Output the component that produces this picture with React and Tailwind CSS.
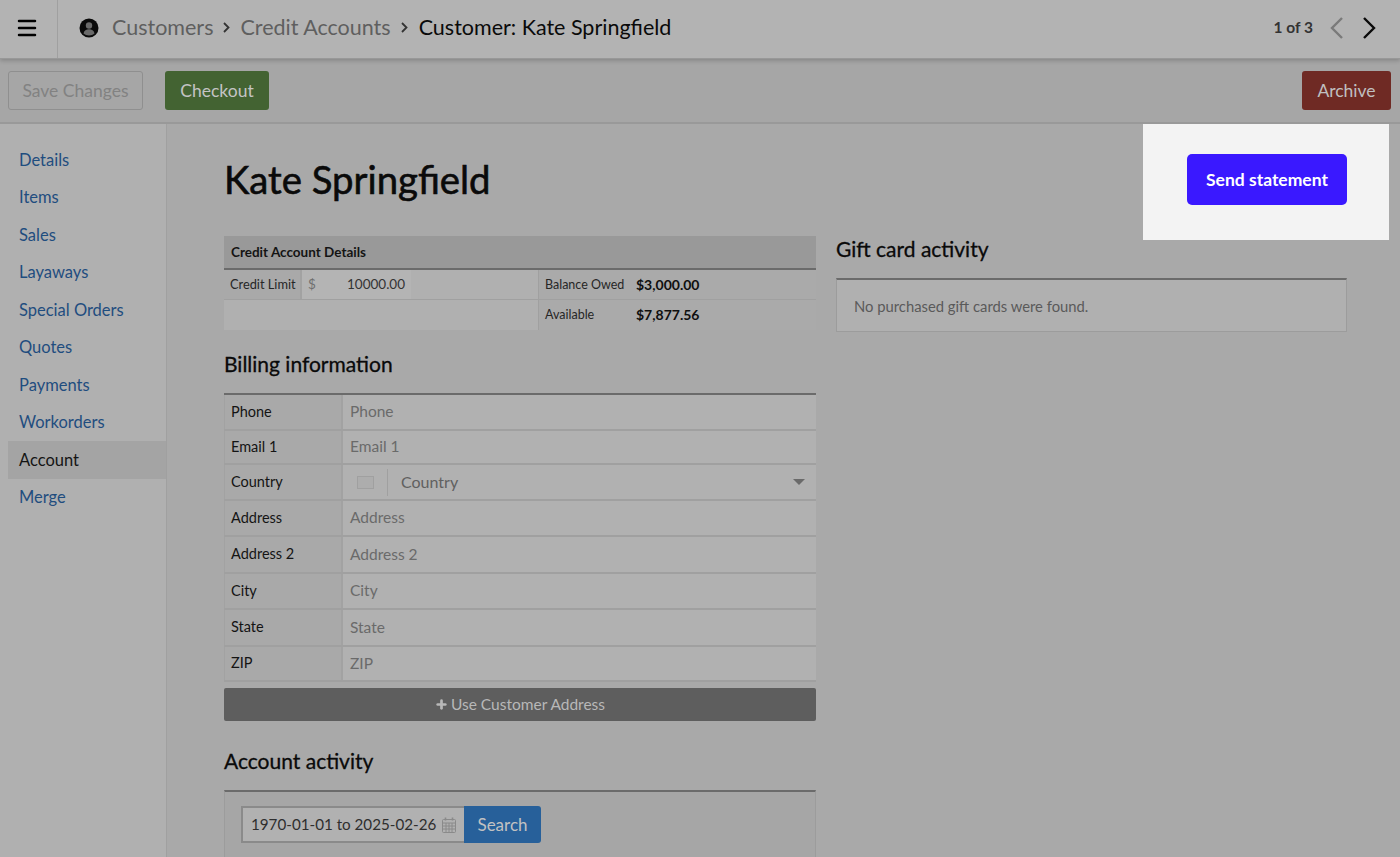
import React from "react";
import { Menu, Plus } from "lucide-react";

const navItems = ["Details", "Items", "Sales", "Layaways", "Special Orders", "Quotes", "Payments", "Workorders", "Account", "Merge"];

const billingRows = [
    { label: "Phone", height: "h-[36px]" },
    { label: "Email 1", height: "h-[34px]" },
    { label: "Country", height: "h-[36px]", select: true },
    { label: "Address", height: "h-[36px]" },
    { label: "Address 2", height: "h-[37px]" },
    { label: "City", height: "h-[36px]" },
    { label: "State", height: "h-[37px]" },
    { label: "ZIP", height: "h-[35px]" },
];

function Crumb() {
    return (
        <svg viewBox="0 0 7 11" className="w-[7px] h-[11px] mx-[10px]" fill="none" stroke="#333333" strokeWidth="1.8">
            <path d="M1 1l4.500 4.500L1 10" />
        </svg>
    );
}

function Header() {
    return (
        <header className="relative z-10 h-[59px] flex items-center pb-[3px] bg-[#b3b3b3] border-b border-[#989898] shadow-[0_2px_4px_rgba(0,0,0,0.18)]">
            <div className="w-[58px] -mb-[3px] h-[58px] pb-[3px] flex items-center justify-center border-r border-[#a0a0a0]">
                <Menu className="w-[24px] h-[24px] text-black -ml-[3px]" strokeWidth={2.5} />
            </div>
            <svg viewBox="0 0 20 20" className="w-5 h-5 ml-[21px]">
                <circle cx="10" cy="10" r="9.5" fill="#0a0a0a" />
                <circle cx="10" cy="7.500" r="3.200" fill="#6a6a6a" />
                <path d="M4.500 15.500c.5-3 2.800-4.300 5.500-4.300s5 1.300 5.500 4.300c-1.400 1.300-3.400 2-5.500 2s-4.100-.7-5.500-2z" fill="#6a6a6a" />
            </svg>
            <nav className="flex items-center ml-[13px] text-[21.5px] text-[#5f5f5f]">
                <span>Customers</span>
                <Crumb />
                <span>Credit Accounts</span>
                <Crumb />
                <span className="ml-[1px] text-[#0a0a0a]">Customer: Kate Springfield</span>
            </nav>
            <div className="ml-auto flex items-center pr-[24px]">
                <span className="text-[15.5px] font-bold text-[#333333] mr-[17px]">1 of 3</span>
                <svg viewBox="0 0 13 22" className="w-[13px] h-[22px] mr-[20px]" fill="none" stroke="#7a7a7a" strokeWidth="2.4">
                    <path d="M12 1L2 11l10 10" />
                </svg>
                <svg viewBox="0 0 13 22" className="w-[13px] h-[22px]" fill="none" stroke="#0a0a0a" strokeWidth="2.4">
                    <path d="M1 1l10 10L1 21" />
                </svg>
            </div>
        </header>
    );
}

function Toolbar() {
    return (
        <div className="h-[65px] flex items-center justify-between bg-[#a6a6a6] border-b-2 border-[#999999] pl-[8px] pr-[9px]">
            <div className="flex items-center gap-[22px]">
                <button className="w-[135px] h-[39px] pt-[1px] rounded-[3px] border border-[#8f8f8f] text-[17.5px] text-[#828282]">Save Changes</button>
                <button className="w-[104px] h-[39px] pt-[1px] rounded-[3px] bg-[#436332] text-[17.5px] text-[#c4c4c4]">Checkout</button>
            </div>
            <button className="w-[89px] h-[39px] pt-[1px] rounded-[3px] bg-[#6f2a24] text-[17.5px] text-[#c0c0c0]">Archive</button>
        </div>
    );
}

function Sidebar() {
    return (
        <aside className="w-[167px] shrink-0 bg-[#b0b0b0] border-r border-[#a0a0a0] pl-[8px] pt-[17.4px]">
            {navItems.map((item) => (
                <div
                    key={item}
                    className={`h-[37.5px] flex items-center pl-[11px] text-[16.5px] ${item === "Account" ? "bg-[#a4a4a4] text-[#141414]" : "text-[#1f4d7f]"}`}
                >
                    {item}
                </div>
            ))}
        </aside>
    );
}

function CreditDetails() {
    return (
        <div className="text-[#1a1a1a] bg-[#b0b0b0]">
            <div className="h-[34px] flex items-center pl-[7px] bg-[#999999] border-b-2 border-[#6b6b6b] text-[13.5px] font-bold text-[#141414]">
                Credit Account Details
            </div>
            <div className="flex h-[30px] border-b border-[#a0a0a0]">
                <div className="w-[314px] flex">
                    <div className="w-[78px] flex items-center pl-[6px] bg-[#a9a9a9] text-[12.8px] text-[#262626] border-r-2 border-[#a2a2a2]">Credit Limit</div>
                    <div className="w-[109px] flex items-center justify-between pl-[6px] pr-[6px] bg-[#b4b4b4] text-[13.5px] text-[#333333]">
                        <span className="text-[#6f6f6f]">$</span>
                        <span>10000.00</span>
                    </div>
                </div>
                <div className="flex-1 flex items-center pl-[6px] bg-[#aaaaaa] text-[12.5px] border-l border-[#a0a0a0]">
                    <span className="w-[91px] mt-[2px] text-[#262626]">Balance Owed</span>
                    <span className="text-[14px] font-bold text-[#0f0f0f]">$3,000.00</span>
                </div>
            </div>
            <div className="flex h-[30px]">
                <div className="w-[314px]" />
                <div className="flex-1 flex items-center pl-[6px] pb-[1px] bg-[#aaaaaa] text-[12.5px] border-l border-[#a0a0a0]">
                    <span className="w-[91px] mt-[2px] text-[#262626]">Available</span>
                    <span className="text-[14px] font-bold text-[#0f0f0f]">$7,877.56</span>
                </div>
            </div>
        </div>
    );
}

function BillingTable() {
    return (
        <div className="border-t-2 border-[#6b6b6b]">
            {billingRows.map((row) => (
                <div key={row.label} className={`${row.height} flex border-b-2 border-[#a0a0a0] bg-[#b1b1b1]`}>
                    <div className="w-[118px] shrink-0 flex items-center pl-[6px] pb-[1px] bg-[#a9a9a9] border-x border-[#a2a2a2] text-[14.5px] text-[#141414]">
                        {row.label}
                    </div>
                    {row.select ? (
                        <div className="flex-1 flex items-center pl-[14px] pr-[11px] border-l border-[#a2a2a2] text-[16px] text-[#606060]">
                            <div className="w-[17px] h-[13px] border border-[#a0a0a0] bg-[#adadad]" />
                            <div className="w-px h-[27px] bg-[#a0a0a0] mx-[13px]" />
                            <span>Country</span>
                            <div className="ml-auto w-0 h-0 border-x-[6px] border-x-transparent border-t-[6px] border-t-[#6a6a6a]" />
                        </div>
                    ) : (
                        <div className="flex-1 flex items-center pl-[7px] border-l border-[#a2a2a2] text-[15.5px] text-[#6a6a6a]">{row.label}</div>
                    )}
                </div>
            ))}
        </div>
    );
}

function CalendarIcon() {
    return (
        <svg viewBox="0 0 14 16" className="w-[14px] h-[16px]" fill="none" stroke="#8a8a8a" strokeWidth="1">
            <rect x="0.500" y="2.500" width="13" height="13" rx="1" />
            <path d="M0.500 6h13M0.500 9h13M0.500 12h13M4 6v9.500M7 6v9.500M10 6v9.500" />
            <path d="M3.500 0.500v3M10.500 0.500v3" strokeWidth="1.600" />
        </svg>
    );
}

function AccountActivity() {
    return (
        <div className="h-[80px] border-t-2 border-[#6b6b6b] border-x border-x-[#9c9c9c] bg-[#a6a6a6] px-[16px] pt-[14px]">
            <div className="flex h-[37px]">
                <div className="w-[223px] flex items-center pl-[8px] pr-[8px] justify-between border-2 border-r-0 border-[#8a8a8a] bg-[#b1b1b1] text-[15.2px] text-[#2e2e2e]">
                    <span className="whitespace-nowrap">1970-01-01 to 2025-02-26</span>
                    <CalendarIcon />
                </div>
                <button className="w-[77px] rounded-r-[3px] bg-[#27609a] text-[17px] text-[#c2c2c2]">Search</button>
            </div>
        </div>
    );
}

export default function App() {
    return (
        <div className="relative w-[1400px] h-[857px] overflow-hidden bg-[#a9a9a9] flex flex-col font-['Lato',sans-serif]">
            <Header />
            <Toolbar />
            <div className="flex flex-1 min-h-0">
                <Sidebar />
                <main className="flex-1 pl-[57px] pr-[53px] pt-[31px]">
                    <h1 className="text-[38.3px] leading-[48px] text-[#0a0a0a] [-webkit-text-stroke:0.6px_#0a0a0a]">Kate Springfield</h1>
                    <div className="flex gap-[20px] mt-[33px]">
                        <div className="w-[592px] shrink-0">
                            <CreditDetails />
                            <h2 className="text-[21px] leading-[26px] text-[#0a0a0a] [-webkit-text-stroke:0.3px_#0a0a0a] mt-[21px] mb-[16px]">Billing information</h2>
                            <BillingTable />
                            <button className="w-full h-[33px] mt-[6px] rounded-[2px] bg-[#5e5e5e] flex items-center justify-center gap-[3px] text-[15.5px] text-[#b8b8b8]">
                                <Plus className="w-[13px] h-[13px]" strokeWidth={5} />
                                Use Customer Address
                            </button>
                            <h2 className="text-[21px] leading-[26px] text-[#0a0a0a] [-webkit-text-stroke:0.3px_#0a0a0a] mt-[27px] mb-[16px]">Account activity</h2>
                            <AccountActivity />
                        </div>
                        <div className="flex-1">
                            <h2 className="text-[21px] leading-[26px] text-[#0a0a0a] [-webkit-text-stroke:0.3px_#0a0a0a] mb-[16px]">Gift card activity</h2>
                            <div className="h-[54px] flex items-center pl-[17px] pt-[1px] border-t-2 border-t-[#6b6b6b] border-x border-b border-x-[#9c9c9c] border-b-[#9c9c9c] bg-[#b0b0b0] text-[14.8px] text-[#5a5a5a]">
                                No purchased gift cards were found.
                            </div>
                        </div>
                    </div>
                </main>
            </div>
            <div className="absolute z-20 left-[1143px] top-[124px] w-[246px] h-[116px] pb-[6px] pl-[2px] bg-[#f3f3f3] flex items-center justify-center">
                <button className="w-[160px] h-[51px] pt-[2px] rounded-[5px] bg-[#3a18ff] text-[17.5px] font-bold text-white">Send statement</button>
            </div>
        </div>
    );
}
